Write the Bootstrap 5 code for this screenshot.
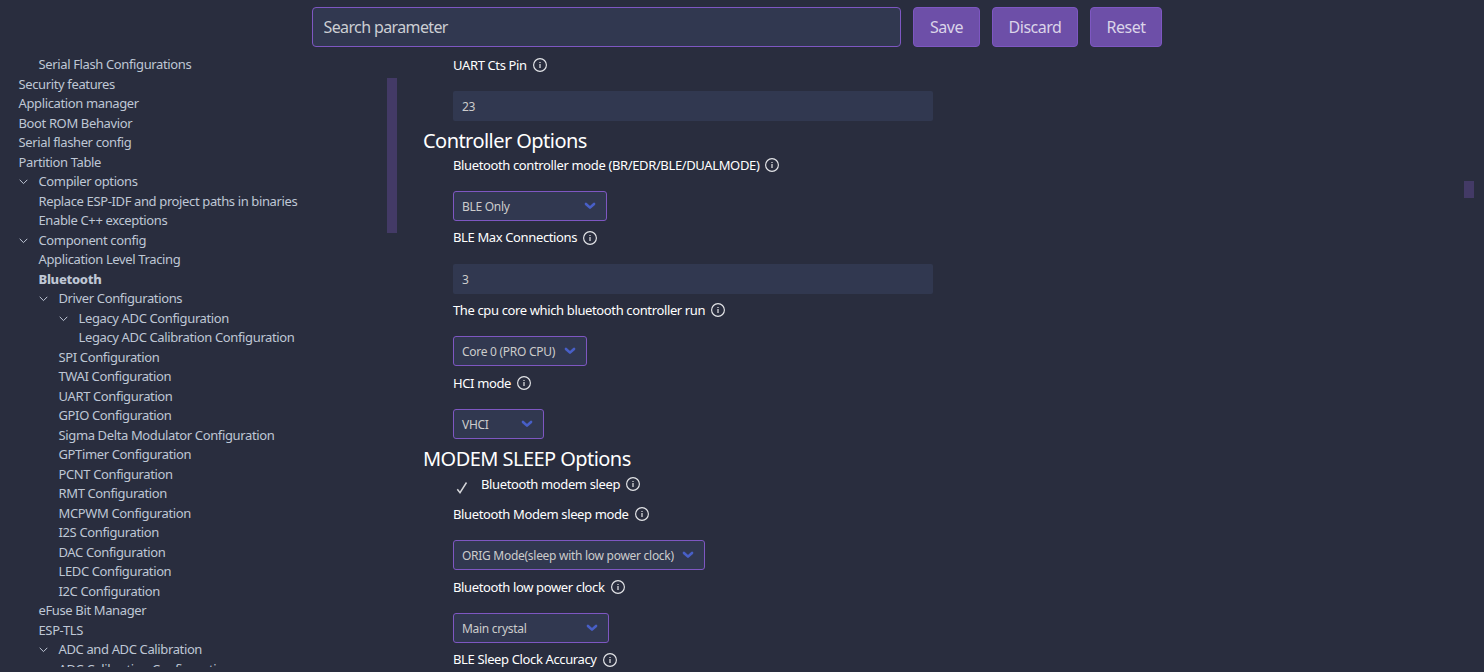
<!DOCTYPE html>
<html lang="en">
<head>
<meta charset="utf-8">
<title>SDK Configuration editor</title>
<link href="https://cdn.jsdelivr.net/npm/bootstrap@5.3.0/dist/css/bootstrap.min.css" rel="stylesheet">
<style>
body { background: #292d3e; color: #fff; font-family: "Noto Sans", "Open Sans", sans-serif; font-size: 13px; line-height: 19.5px; letter-spacing: -.37px; white-space: nowrap; }
.topbar { height: 54px; padding-top: 7px; padding-right: 10px; gap: 12px; }
.topbar .form-control { width: 589px; height: 40px; background: #313850; border-color: #7e57c2; border-radius: 4px; padding: 0 10.5px; font-size: 16px; letter-spacing: -.62px; color: #ccc; }
.topbar .form-control::placeholder { color: #ccced3; opacity: 1; }
.btn-tool { height: 40px; padding: 0; background: #6d4fa8; border: 1px solid #7e57c2; border-radius: 4px; color: #dbd4e9; font-size: 16px; letter-spacing: -.5px; }
.w-save { width: 67px; } .w-discard { width: 86px; } .w-reset { width: 72px; }
.workspace { height: 618px; }
.side { width: 397px; height: 613px; color: #bfc7d5; }
.tree { padding: 1.1px 0 0 18.5px; }
.tree ul { list-style: none; margin: 0; padding-left: 20px; }
.tree li > span { display: flex; height: 19.5px; align-items: center; }
.tree .chev { width: 9px; height: 9px; margin: 0 11px 0 0; }
.tree .picked { font-weight: 800; letter-spacing: -.3px; }
.thumb { width: 10px; background: #433a66; flex: none; }
.thumb-side { height: 155px; margin-top: 24px; }
.thumb-main { height: 17px; margin: 127px 10px 0 0; }
.content-pane { padding: 1.5px 0 0 26px; }
.group-title { font-size: 20px; line-height: 30px; height: 34.75px; margin: 0; padding-top: 5px; letter-spacing: -.55px; font-weight: 400; }
.group-title-sleep { height: 35.75px; }
.field { height: 72.75px; padding-left: 30px; }
.field-last { height: 65.25px; }
.caption { height: 19.5px; margin-bottom: 15.75px; gap: 5px; }
.caption svg { width: 16px; height: 16px; margin-bottom: 1px; }
.entry, .picker { height: 30px; background-color: #313850; color: #ccc; font-size: 12px; padding: 1px 9px 0; border-radius: 2px; letter-spacing: -.28px; }
.entry { width: 480px; border: 0; }
.picker { border: 1px solid #7e57c2; border-radius: 3px; padding: 1px 10px 0 8px; }
.picker svg { width: 12px; height: 8px; margin-bottom: 1px; }
.p-ble { width: 154px; } .p-core { width: 134px; } .p-hci { width: 91px; } .p-orig { width: 252px; } .p-clock { width: 156px; }
.check-row { height: 30px; padding-left: 30px; }
.check-row .tick { width: 12px; height: 13px; margin: 6px 13px 0 3px; }
.check-row .caption { margin: 0; }
</style>
</head>
<body class="overflow-hidden vh-100">
<svg class="d-none">
  <symbol id="info" viewBox="0 0 16 16"><circle cx="8" cy="8" r="6.4" fill="none" stroke="#e4e5e8" stroke-width="1.15"/><path d="M7.4 7h1.2v4H7.4zM7.4 5h1.2v1.1H7.4z" fill="#e4e5e8"/></symbol>
  <symbol id="chev" viewBox="0 0 9 9"><path d="M.7 2.8 4.5 6.6 8.3 2.8" fill="none" stroke="#bfc7d5" stroke-width="1"/></symbol>
  <symbol id="arrow" viewBox="0 0 11 7"><path d="M1.8 1.6 5.5 5 9.2 1.6" fill="none" stroke="#485fc7" stroke-width="2.4" stroke-linecap="round" stroke-linejoin="round"/></symbol>
</svg>
<header class="topbar d-flex justify-content-center">
  <input class="form-control" type="text" placeholder="Search parameter">
  <button class="btn btn-tool w-save">Save</button>
  <button class="btn btn-tool w-discard">Discard</button>
  <button class="btn btn-tool w-reset">Reset</button>
</header>
<div class="workspace d-flex overflow-hidden">
  <aside class="side d-flex overflow-hidden flex-shrink-0">
    <nav class="tree flex-grow-1">
      <ul class="p-0">
        <li><ul><li><span>Serial Flash Configurations</span></li></ul></li>
        <li><span>Security features</span></li>
        <li><span>Application manager</span></li>
        <li><span>Boot ROM Behavior</span></li>
        <li><span>Serial flasher config</span></li>
        <li><span>Partition Table</span></li>
        <li><span><svg class="chev"><use href="#chev"/></svg>Compiler options</span>
          <ul><li><span>Replace ESP-IDF and project paths in binaries</span></li><li><span>Enable C++ exceptions</span></li></ul></li>
        <li><span><svg class="chev"><use href="#chev"/></svg>Component config</span>
          <ul>
            <li><span>Application Level Tracing</span></li>
            <li><span class="picked">Bluetooth</span></li>
            <li><span><svg class="chev"><use href="#chev"/></svg>Driver Configurations</span>
              <ul>
                <li><span><svg class="chev"><use href="#chev"/></svg>Legacy ADC Configuration</span>
                  <ul><li><span>Legacy ADC Calibration Configuration</span></li></ul></li>
                <li><span>SPI Configuration</span></li>
                <li><span>TWAI Configuration</span></li>
                <li><span>UART Configuration</span></li>
                <li><span>GPIO Configuration</span></li>
                <li><span>Sigma Delta Modulator Configuration</span></li>
                <li><span>GPTimer Configuration</span></li>
                <li><span>PCNT Configuration</span></li>
                <li><span>RMT Configuration</span></li>
                <li><span>MCPWM Configuration</span></li>
                <li><span>I2S Configuration</span></li>
                <li><span>DAC Configuration</span></li>
                <li><span>LEDC Configuration</span></li>
                <li><span>I2C Configuration</span></li>
              </ul></li>
            <li><span>eFuse Bit Manager</span></li>
            <li><span>ESP-TLS</span></li>
            <li><span><svg class="chev"><use href="#chev"/></svg>ADC and ADC Calibration</span>
              <ul><li><span>ADC Calibration Configuration</span></li></ul></li>
          </ul></li>
      </ul>
    </nav>
    <div class="thumb thumb-side"></div>
  </aside>
  <main class="content-pane flex-grow-1">
    <div class="field field-last">
      <div class="caption d-flex align-items-center">UART Cts Pin <svg><use href="#info"/></svg></div>
      <input class="entry d-block" value="23">
    </div>
    <h2 class="group-title">Controller Options</h2>
    <div class="field">
      <div class="caption d-flex align-items-center">Bluetooth controller mode (BR/EDR/BLE/DUALMODE) <svg><use href="#info"/></svg></div>
      <div class="picker p-ble d-flex align-items-center justify-content-between">BLE Only <svg><use href="#arrow"/></svg></div>
    </div>
    <div class="field">
      <div class="caption d-flex align-items-center">BLE Max Connections <svg><use href="#info"/></svg></div>
      <input class="entry d-block" value="3">
    </div>
    <div class="field">
      <div class="caption d-flex align-items-center">The cpu core which bluetooth controller run <svg><use href="#info"/></svg></div>
      <div class="picker p-core d-flex align-items-center justify-content-between">Core 0 (PRO CPU) <svg><use href="#arrow"/></svg></div>
    </div>
    <div class="field field-last">
      <div class="caption d-flex align-items-center">HCI mode <svg><use href="#info"/></svg></div>
      <div class="picker p-hci d-flex align-items-center justify-content-between">VHCI <svg><use href="#arrow"/></svg></div>
    </div>
    <h2 class="group-title group-title-sleep">MODEM SLEEP Options</h2>
    <div class="check-row d-flex">
      <svg class="tick" viewBox="0 0 12 13"><path d="M1.3 8.2 4 11.6 10.5 1.5" fill="none" stroke="#d4d5d9" stroke-width="1.5"/></svg>
      <div class="caption d-flex align-items-center">Bluetooth modem sleep <svg><use href="#info"/></svg></div>
    </div>
    <div class="field">
      <div class="caption d-flex align-items-center">Bluetooth Modem sleep mode <svg><use href="#info"/></svg></div>
      <div class="picker p-orig d-flex align-items-center justify-content-between">ORIG Mode(sleep with low power clock) <svg><use href="#arrow"/></svg></div>
    </div>
    <div class="field">
      <div class="caption d-flex align-items-center">Bluetooth low power clock <svg><use href="#info"/></svg></div>
      <div class="picker p-clock d-flex align-items-center justify-content-between">Main crystal <svg><use href="#arrow"/></svg></div>
    </div>
    <div class="field">
      <div class="caption d-flex align-items-center">BLE Sleep Clock Accuracy <svg><use href="#info"/></svg></div>
    </div>
  </main>
  <div class="thumb thumb-main"></div>
</div>
<script src="https://cdn.jsdelivr.net/npm/bootstrap@5.3.0/dist/js/bootstrap.bundle.min.js"></script>
</body>
</html>
